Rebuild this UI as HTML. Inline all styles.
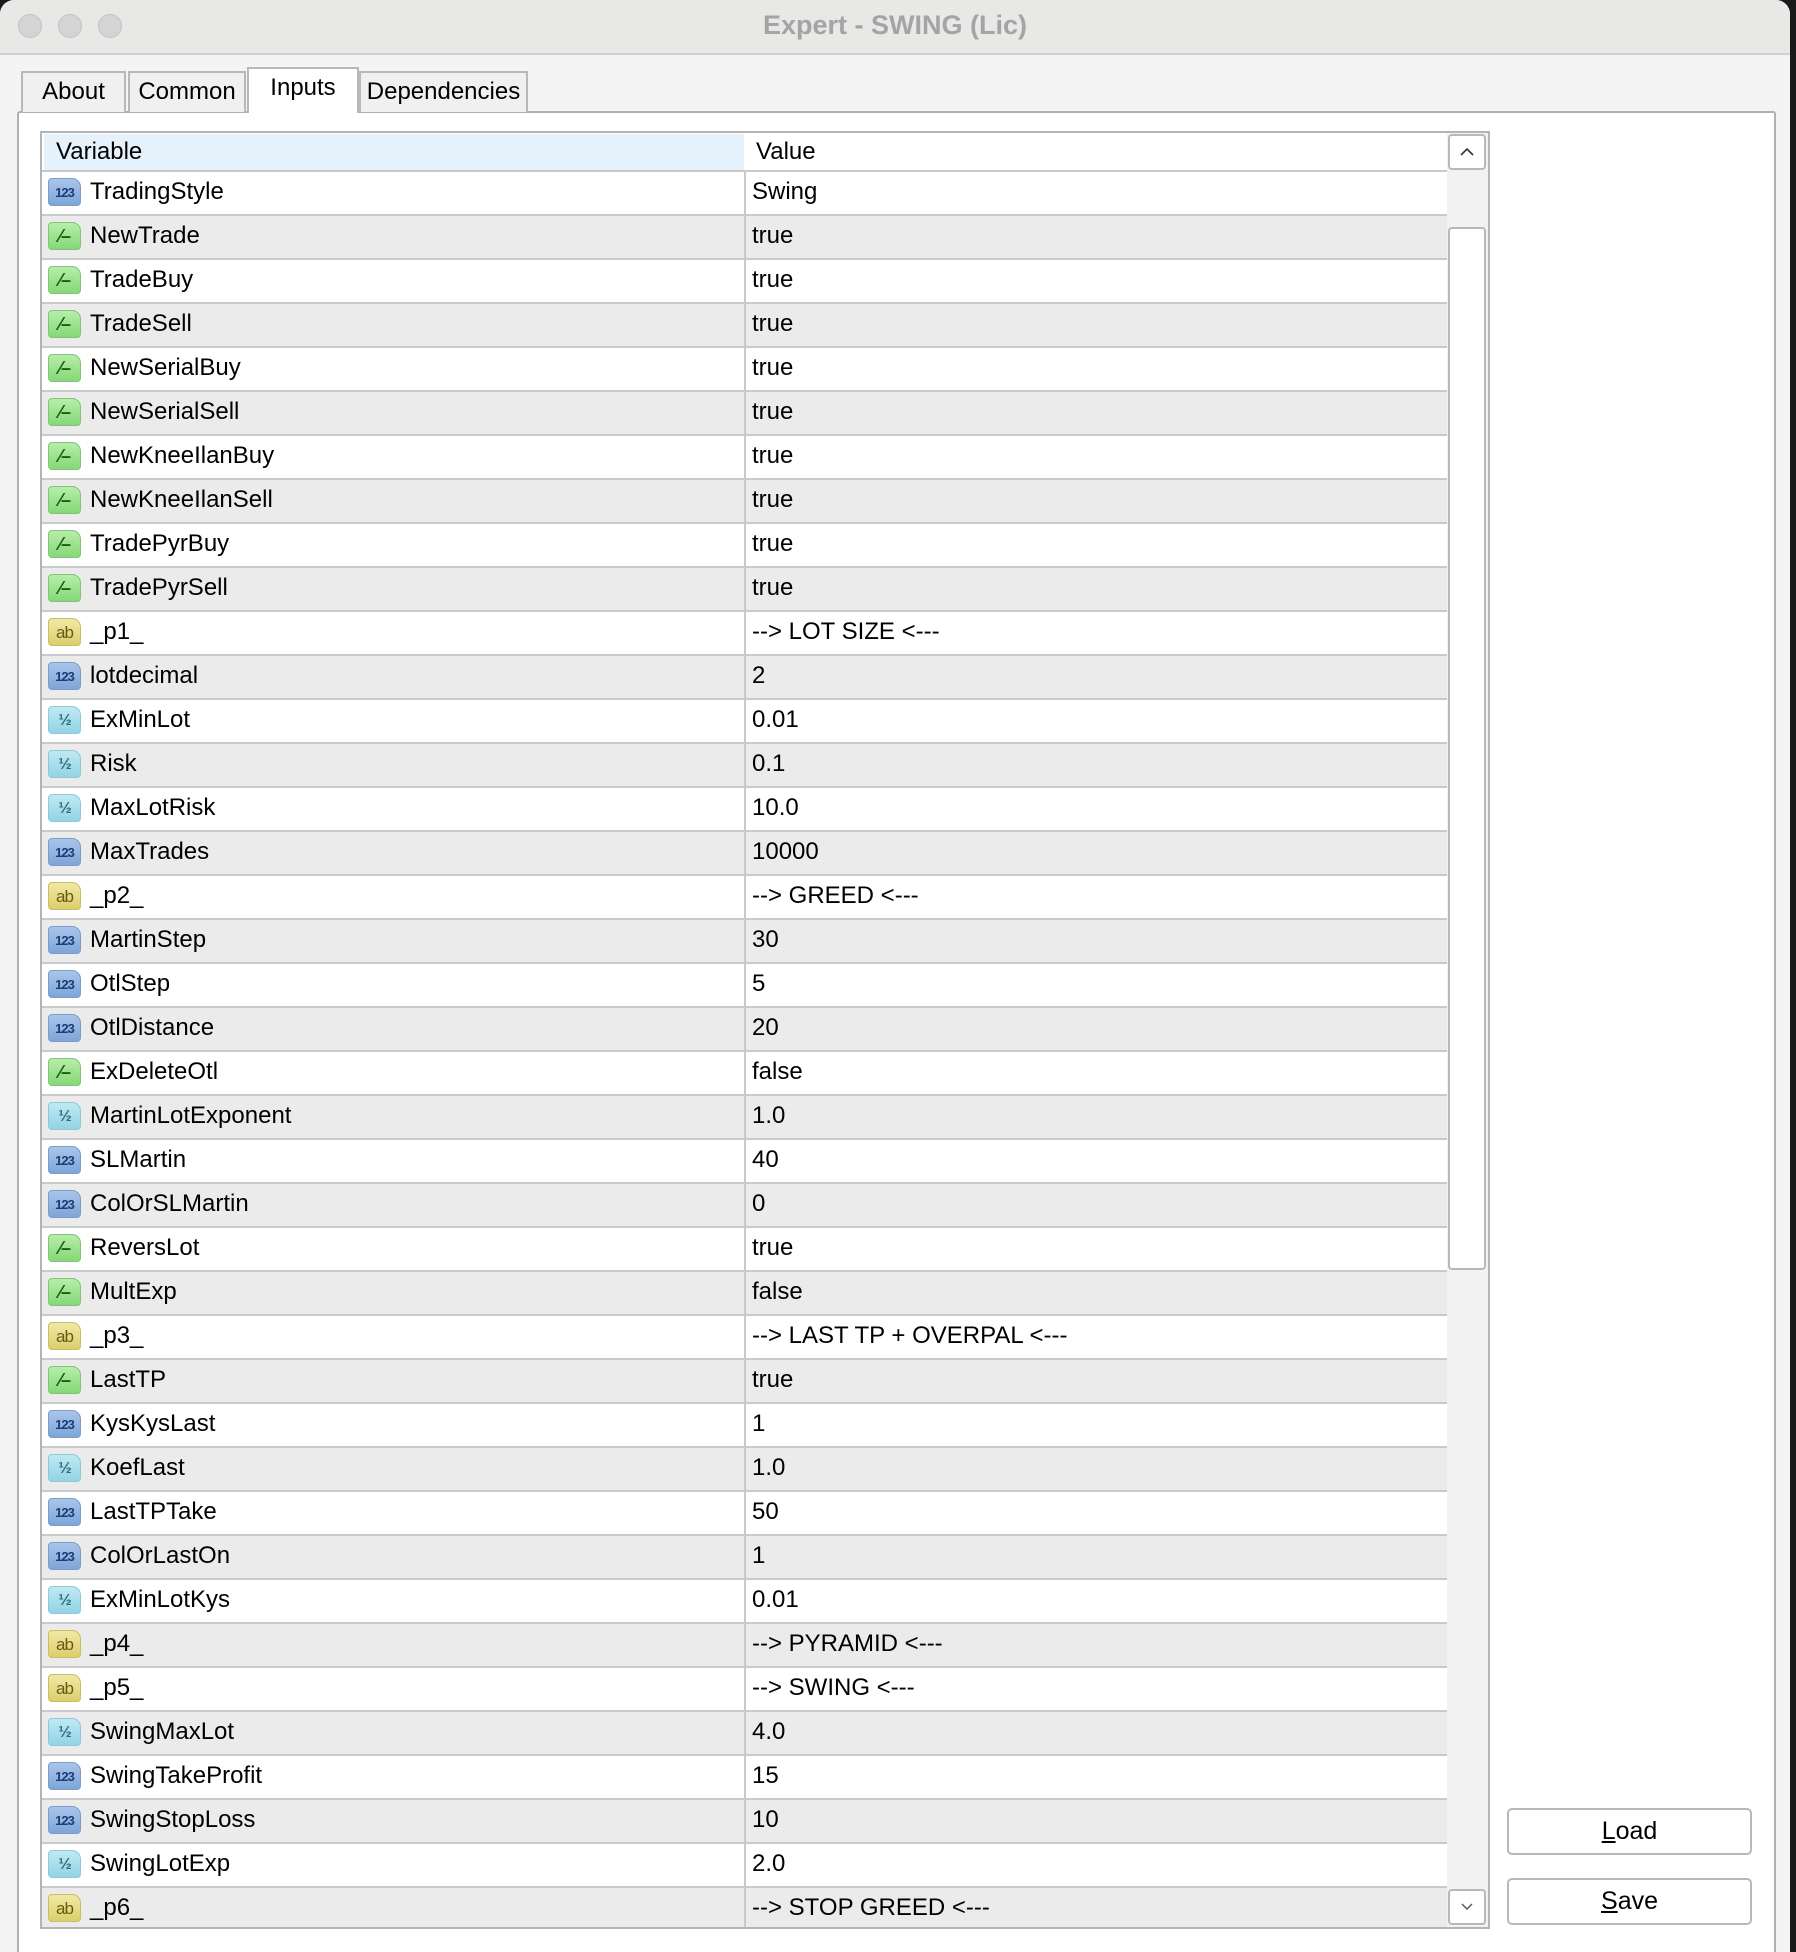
<!DOCTYPE html>
<html><head><meta charset="utf-8"><style>
*{margin:0;padding:0;box-sizing:border-box}
body{width:1796px;height:1952px;background:#1a1a1a;position:relative;overflow:hidden;font-family:"Liberation Sans","DejaVu Sans",sans-serif;color:#000}
.win{position:absolute;left:0;top:0;width:1790px;height:1952px;background:#f4f4f4;border-radius:14px 14px 0 0;overflow:hidden}
.title{position:absolute;left:0;top:0;width:100%;height:55px;background:#e8e8e6;border-bottom:2px solid #d0d0d0}
.title span{position:absolute;left:0;width:100%;top:10px;text-align:center;font-size:27px;font-weight:bold;color:#a4a4a4}
.dot{position:absolute;top:14px;width:24px;height:24px;border-radius:50%;background:#d4d4d4;border:1px solid #c2c2c2}
.tab{position:absolute;top:71px;height:41px;border:2px solid #b8b8b8;border-bottom:none;background:#f0f0f0;font-size:24px;text-align:center;line-height:38px}
.tab.act{top:67px;height:46px;background:#fff;z-index:3;line-height:38px}
.panel{position:absolute;left:17px;top:111px;width:1759px;height:1860px;background:#fff;border:2px solid #b0b0b0;border-radius:3px}
.table{position:absolute;left:40px;top:131px;width:1450px;height:1798px;border:2px solid #b4b4b4;background:#fff;overflow:hidden}
.hdr{position:absolute;left:2px;top:1px;width:700px;height:36px;background:#e5f1fb;font-size:24px;line-height:36px;padding-left:12px}
.hdr2{position:absolute;left:702px;top:1px;width:700px;height:36px;font-size:24px;line-height:36px;padding-left:12px}
.row{position:absolute;left:0;width:1405px;height:44px;border-top:2px solid #c9c9c9;font-size:24px;line-height:40px}
.row.g{background:#ebebeb}
.row .n{position:absolute;left:48px;top:0}
.row .v{position:absolute;left:702px;top:0;height:100%;border-left:2px solid #c9c9c9;padding-left:6px}
.ic{position:absolute;left:6px;top:6px;width:33px;height:28px;border-radius:4px 9px 4px 4px;font-size:13px;font-weight:bold;line-height:27px;text-align:center;letter-spacing:-1px}
.i_n{background:linear-gradient(#a9c6ea,#7ea5d8);color:#1c3c78;border:1px solid #7c9ccc}
.i_b{background:linear-gradient(#b6eeaa,#86d877);color:#1d5a12;border:1px solid #82c474;font-size:18px}
.i_d{background:linear-gradient(#bfe9f2,#93d4e4);color:#2b6f85;border:1px solid #8ccadb;font-size:16px}
.i_s{background:linear-gradient(#f1e8a6,#dccf6d);color:#6a5a10;border:1px solid #cbbd60;font-size:17px;font-weight:normal}
.sb{position:absolute;left:1447px;top:133px;width:41px;height:1794px;background:#f2f2f2}
.sbtn{position:absolute;left:1448px;width:38px;height:36px;background:#fff;border:2px solid #b8b8b8;border-radius:4px}
.thumb{position:absolute;left:1448px;top:227px;width:38px;height:1043px;background:#fff;border:2px solid #b8b8b8;border-radius:4px}
.btn{position:absolute;left:1507px;width:245px;height:47px;border:2px solid #b8b8b8;border-radius:5px;background:#fff;font-size:25px;text-align:center;line-height:43px}
</style></head><body>
<div class="win">
<div class="title"><span>Expert - SWING (Lic)</span></div>
<div class="dot" style="left:18px"></div><div class="dot" style="left:58px"></div><div class="dot" style="left:98px"></div>
<div class="panel"></div>
<div class="tab" style="left:21px;width:105px">About</div>
<div class="tab" style="left:128px;width:118px">Common</div>
<div class="tab act" style="left:247px;width:112px">Inputs</div>
<div class="tab" style="left:359px;width:169px">Dependencies</div>
<div class="table">
<div class="hdr">Variable</div><div class="hdr2">Value</div>
<div class="row" style="top:37px"><div class="ic i_n">123</div><span class="n">TradingStyle</span><span class="v">Swing</span></div>
<div class="row g" style="top:81px"><div class="ic i_b">⁄–</div><span class="n">NewTrade</span><span class="v">true</span></div>
<div class="row" style="top:125px"><div class="ic i_b">⁄–</div><span class="n">TradeBuy</span><span class="v">true</span></div>
<div class="row g" style="top:169px"><div class="ic i_b">⁄–</div><span class="n">TradeSell</span><span class="v">true</span></div>
<div class="row" style="top:213px"><div class="ic i_b">⁄–</div><span class="n">NewSerialBuy</span><span class="v">true</span></div>
<div class="row g" style="top:257px"><div class="ic i_b">⁄–</div><span class="n">NewSerialSell</span><span class="v">true</span></div>
<div class="row" style="top:301px"><div class="ic i_b">⁄–</div><span class="n">NewKneeIlanBuy</span><span class="v">true</span></div>
<div class="row g" style="top:345px"><div class="ic i_b">⁄–</div><span class="n">NewKneeIlanSell</span><span class="v">true</span></div>
<div class="row" style="top:389px"><div class="ic i_b">⁄–</div><span class="n">TradePyrBuy</span><span class="v">true</span></div>
<div class="row g" style="top:433px"><div class="ic i_b">⁄–</div><span class="n">TradePyrSell</span><span class="v">true</span></div>
<div class="row" style="top:477px"><div class="ic i_s">ab</div><span class="n">_p1_</span><span class="v">--&gt; LOT SIZE &lt;---</span></div>
<div class="row g" style="top:521px"><div class="ic i_n">123</div><span class="n">lotdecimal</span><span class="v">2</span></div>
<div class="row" style="top:565px"><div class="ic i_d">½</div><span class="n">ExMinLot</span><span class="v">0.01</span></div>
<div class="row g" style="top:609px"><div class="ic i_d">½</div><span class="n">Risk</span><span class="v">0.1</span></div>
<div class="row" style="top:653px"><div class="ic i_d">½</div><span class="n">MaxLotRisk</span><span class="v">10.0</span></div>
<div class="row g" style="top:697px"><div class="ic i_n">123</div><span class="n">MaxTrades</span><span class="v">10000</span></div>
<div class="row" style="top:741px"><div class="ic i_s">ab</div><span class="n">_p2_</span><span class="v">--&gt; GREED &lt;---</span></div>
<div class="row g" style="top:785px"><div class="ic i_n">123</div><span class="n">MartinStep</span><span class="v">30</span></div>
<div class="row" style="top:829px"><div class="ic i_n">123</div><span class="n">OtlStep</span><span class="v">5</span></div>
<div class="row g" style="top:873px"><div class="ic i_n">123</div><span class="n">OtlDistance</span><span class="v">20</span></div>
<div class="row" style="top:917px"><div class="ic i_b">⁄–</div><span class="n">ExDeleteOtl</span><span class="v">false</span></div>
<div class="row g" style="top:961px"><div class="ic i_d">½</div><span class="n">MartinLotExponent</span><span class="v">1.0</span></div>
<div class="row" style="top:1005px"><div class="ic i_n">123</div><span class="n">SLMartin</span><span class="v">40</span></div>
<div class="row g" style="top:1049px"><div class="ic i_n">123</div><span class="n">ColOrSLMartin</span><span class="v">0</span></div>
<div class="row" style="top:1093px"><div class="ic i_b">⁄–</div><span class="n">ReversLot</span><span class="v">true</span></div>
<div class="row g" style="top:1137px"><div class="ic i_b">⁄–</div><span class="n">MultExp</span><span class="v">false</span></div>
<div class="row" style="top:1181px"><div class="ic i_s">ab</div><span class="n">_p3_</span><span class="v">--&gt; LAST TP + OVERPAL &lt;---</span></div>
<div class="row g" style="top:1225px"><div class="ic i_b">⁄–</div><span class="n">LastTP</span><span class="v">true</span></div>
<div class="row" style="top:1269px"><div class="ic i_n">123</div><span class="n">KysKysLast</span><span class="v">1</span></div>
<div class="row g" style="top:1313px"><div class="ic i_d">½</div><span class="n">KoefLast</span><span class="v">1.0</span></div>
<div class="row" style="top:1357px"><div class="ic i_n">123</div><span class="n">LastTPTake</span><span class="v">50</span></div>
<div class="row g" style="top:1401px"><div class="ic i_n">123</div><span class="n">ColOrLastOn</span><span class="v">1</span></div>
<div class="row" style="top:1445px"><div class="ic i_d">½</div><span class="n">ExMinLotKys</span><span class="v">0.01</span></div>
<div class="row g" style="top:1489px"><div class="ic i_s">ab</div><span class="n">_p4_</span><span class="v">--&gt; PYRAMID &lt;---</span></div>
<div class="row" style="top:1533px"><div class="ic i_s">ab</div><span class="n">_p5_</span><span class="v">--&gt; SWING &lt;---</span></div>
<div class="row g" style="top:1577px"><div class="ic i_d">½</div><span class="n">SwingMaxLot</span><span class="v">4.0</span></div>
<div class="row" style="top:1621px"><div class="ic i_n">123</div><span class="n">SwingTakeProfit</span><span class="v">15</span></div>
<div class="row g" style="top:1665px"><div class="ic i_n">123</div><span class="n">SwingStopLoss</span><span class="v">10</span></div>
<div class="row" style="top:1709px"><div class="ic i_d">½</div><span class="n">SwingLotExp</span><span class="v">2.0</span></div>
<div class="row g" style="top:1753px"><div class="ic i_s">ab</div><span class="n">_p6_</span><span class="v">--&gt; STOP GREED &lt;---</span></div>
</div>
<div class="sb"></div>
<div class="sbtn" style="top:134px"><svg width="34" height="32" viewBox="0 0 34 32"><path d="M11 19 L17 13 L23 19" fill="none" stroke="#333" stroke-width="1.6"/></svg></div>
<div class="thumb"></div>
<div class="sbtn" style="top:1889px"><svg width="34" height="32" viewBox="0 0 34 32"><path d="M12 13 L17 18 L22 13" fill="none" stroke="#555" stroke-width="1.4"/></svg></div>
<div class="btn" style="top:1808px"><u>L</u>oad</div>
<div class="btn" style="top:1878px"><u>S</u>ave</div>
</div>
</body></html>
